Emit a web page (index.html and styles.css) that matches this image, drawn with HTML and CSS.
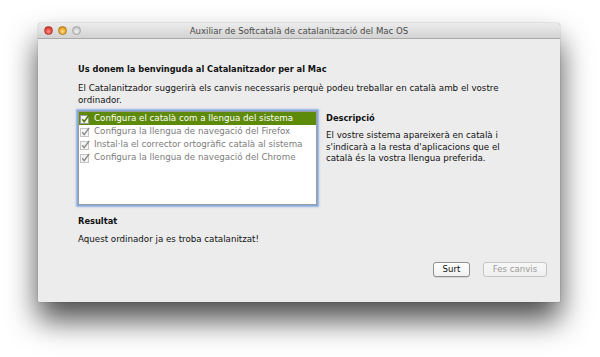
FILE: index.html
```html
<!DOCTYPE html>
<html>
<head>
<meta charset="utf-8">
<link rel="stylesheet" href="styles.css">
</head>
<body>
<div class="window">
  <div class="titlebar">
    <div class="lights">
      <span class="light red"></span>
      <span class="light yellow"></span>
      <span class="light grey"></span>
    </div>
    <div class="title">Auxiliar de Softcatalà de catalanització del Mac OS</div>
  </div>
  <div class="content">
    <h1 class="heading">Us donem la benvinguda al Catalanitzador per al Mac</h1>
    <p class="intro">El Catalanitzador suggerirà els canvis necessaris perquè podeu treballar en català amb el vostre ordinador.</p>
    <div class="main">
      <div class="listbox">
        <div class="row selected"><span class="cb"><svg viewBox="0 0 10 10" width="10" height="10"><rect x="0.5" y="1.5" width="8" height="8" fill="#f4f4f4" stroke="#9a9a9a"/><path d="M2.2 5.2 L4.2 7.6 L9.2 0.8" fill="none" stroke="#4f7d10" stroke-width="1.6"/></svg></span>Configura el català com a llengua del sistema</div>
        <div class="row"><span class="cb"><svg viewBox="0 0 10 10" width="10" height="10"><rect x="0.5" y="1.5" width="8" height="8" fill="#f4f4f4" stroke="#c4c4c4"/><path d="M2.2 5.2 L4.2 7.6 L9.2 0.8" fill="none" stroke="#8a8a8a" stroke-width="1.4"/></svg></span>Configura la llengua de navegació del Firefox</div>
        <div class="row"><span class="cb"><svg viewBox="0 0 10 10" width="10" height="10"><rect x="0.5" y="1.5" width="8" height="8" fill="#f4f4f4" stroke="#c4c4c4"/><path d="M2.2 5.2 L4.2 7.6 L9.2 0.8" fill="none" stroke="#8a8a8a" stroke-width="1.4"/></svg></span>Instal·la el corrector ortogràfic català al sistema</div>
        <div class="row"><span class="cb"><svg viewBox="0 0 10 10" width="10" height="10"><rect x="0.5" y="1.5" width="8" height="8" fill="#f4f4f4" stroke="#c4c4c4"/><path d="M2.2 5.2 L4.2 7.6 L9.2 0.8" fill="none" stroke="#8a8a8a" stroke-width="1.4"/></svg></span>Configura la llengua de navegació del Chrome</div>
      </div>
      <div class="desc">
        <h2 class="label">Descripció</h2>
        <p class="desc-text">El vostre sistema apareixerà en català i s'indicarà a la resta d'aplicacions que el català és la vostra llengua preferida.</p>
      </div>
    </div>
    <h2 class="label result-label">Resultat</h2>
    <p class="result">Aquest ordinador ja es troba catalanitzat!</p>
    <div class="buttons">
      <button class="btn">Surt</button>
      <button class="btn disabled">Fes canvis</button>
    </div>
  </div>
</div>
</body>
</html>
```
FILE: styles.css
```css
html, body {
  margin: 0;
  background: #ffffff;
}
html {
  height: 100%;
}
body {
  box-sizing: border-box;
  min-height: 357px;
  padding: 23px 0 0 38px;
  font-family: "DejaVu Sans", sans-serif;
  font-size: 8.7px;
  color: #111;
}
.window {
  width: 522px;
  height: 279px;
  background: #ececec;
  border-radius: 4px 4px 1px 1px;
  box-shadow: 0 18px 30px rgba(0,0,0,0.7), 0 0 1px rgba(0,0,0,0.6);
  display: flex;
  flex-direction: column;
  overflow: hidden;
}
.titlebar {
  height: 15px;
  flex: none;
  display: flex;
  align-items: center;
  background: linear-gradient(#ececec, #d3d3d3);
  border-bottom: 1px solid #a9a9a9;
  position: relative;
}
.lights {
  display: flex;
  gap: 5px;
  margin-left: 6px;
}
.light {
  width: 9px;
  height: 9px;
  border-radius: 50%;
  box-sizing: border-box;
}
.red { background: radial-gradient(circle at 50% 65%, #ff8f86, #e0443a 60%, #b4281f); border: 0.5px solid #b33a31; }
.yellow { background: radial-gradient(circle at 50% 65%, #ffe08a, #e8a523 60%, #b87a10); border: 0.5px solid #b07c1c; }
.grey { background: radial-gradient(circle at 50% 65%, #f2f2f2, #cfcfcf 60%, #b0b0b0); border: 0.5px solid #a6a6a6; }
.title {
  position: absolute;
  left: 0;
  right: 0;
  top: 2px;
  text-align: center;
  color: #4a4a4a;
  font-size: 8.6px;
  line-height: 12px;
}
.content {
  flex: 1;
  padding: 24px 13px 0 40px;
  display: flex;
  flex-direction: column;
}
.heading {
  margin: 0;
  font-size: 8.25px;
  font-weight: bold;
  line-height: 12px;
}
.intro {
  margin: 8px 0 0;
  width: 450px;
  line-height: 11.5px;
}
.main {
  display: flex;
  gap: 9px;
  margin-top: 5px;
}
.listbox {
  width: 237px;
  height: 92px;
  background: #fff;
  border: 1px solid #9c9c9c;
  box-shadow: 0 0 0 1.5px #86abe0, 0 0 2px 2px rgba(120,160,220,0.5);
  flex: none;
}
.row {
  height: 13px;
  line-height: 13px;
  color: #7c7c7c;
  display: flex;
  align-items: center;
  white-space: nowrap;
}
.row.selected {
  background: #5e8a0a;
  color: #fff;
}
.cb {
  width: 10px;
  height: 10px;
  margin: 0 4px 0 1px;
  display: flex;
}
.desc {
  width: 190px;
}
.label {
  margin: 0;
  font-size: 8.3px;
  font-weight: bold;
  line-height: 12px;
  padding-top: 1px;
}
.desc-text {
  margin: 6px 0 0;
  line-height: 11.5px;
}
.result-label {
  margin-top: 9px;
}
.result {
  margin: 6px 0 0;
  line-height: 12px;
}
.buttons {
  display: flex;
  justify-content: flex-end;
  gap: 13px;
  margin-top: 17px;
}
.btn {
  font-family: "DejaVu Sans", sans-serif;
  font-size: 8.6px;
  height: 15px;
  padding: 0;
  border-radius: 3px;
  border: 1px solid #8f8f8f;
  background: linear-gradient(#ffffff, #f1f1f1);
  color: #111;
  width: 37px;
  line-height: 13px;
  box-shadow: 0 0.5px 0.5px rgba(0,0,0,0.2);
}
.btn.disabled {
  width: 64px;
  color: #9a9a9a;
  border-color: #c4c4c4;
  background: linear-gradient(#f7f7f7, #efefef);
  box-shadow: none;
}
```
